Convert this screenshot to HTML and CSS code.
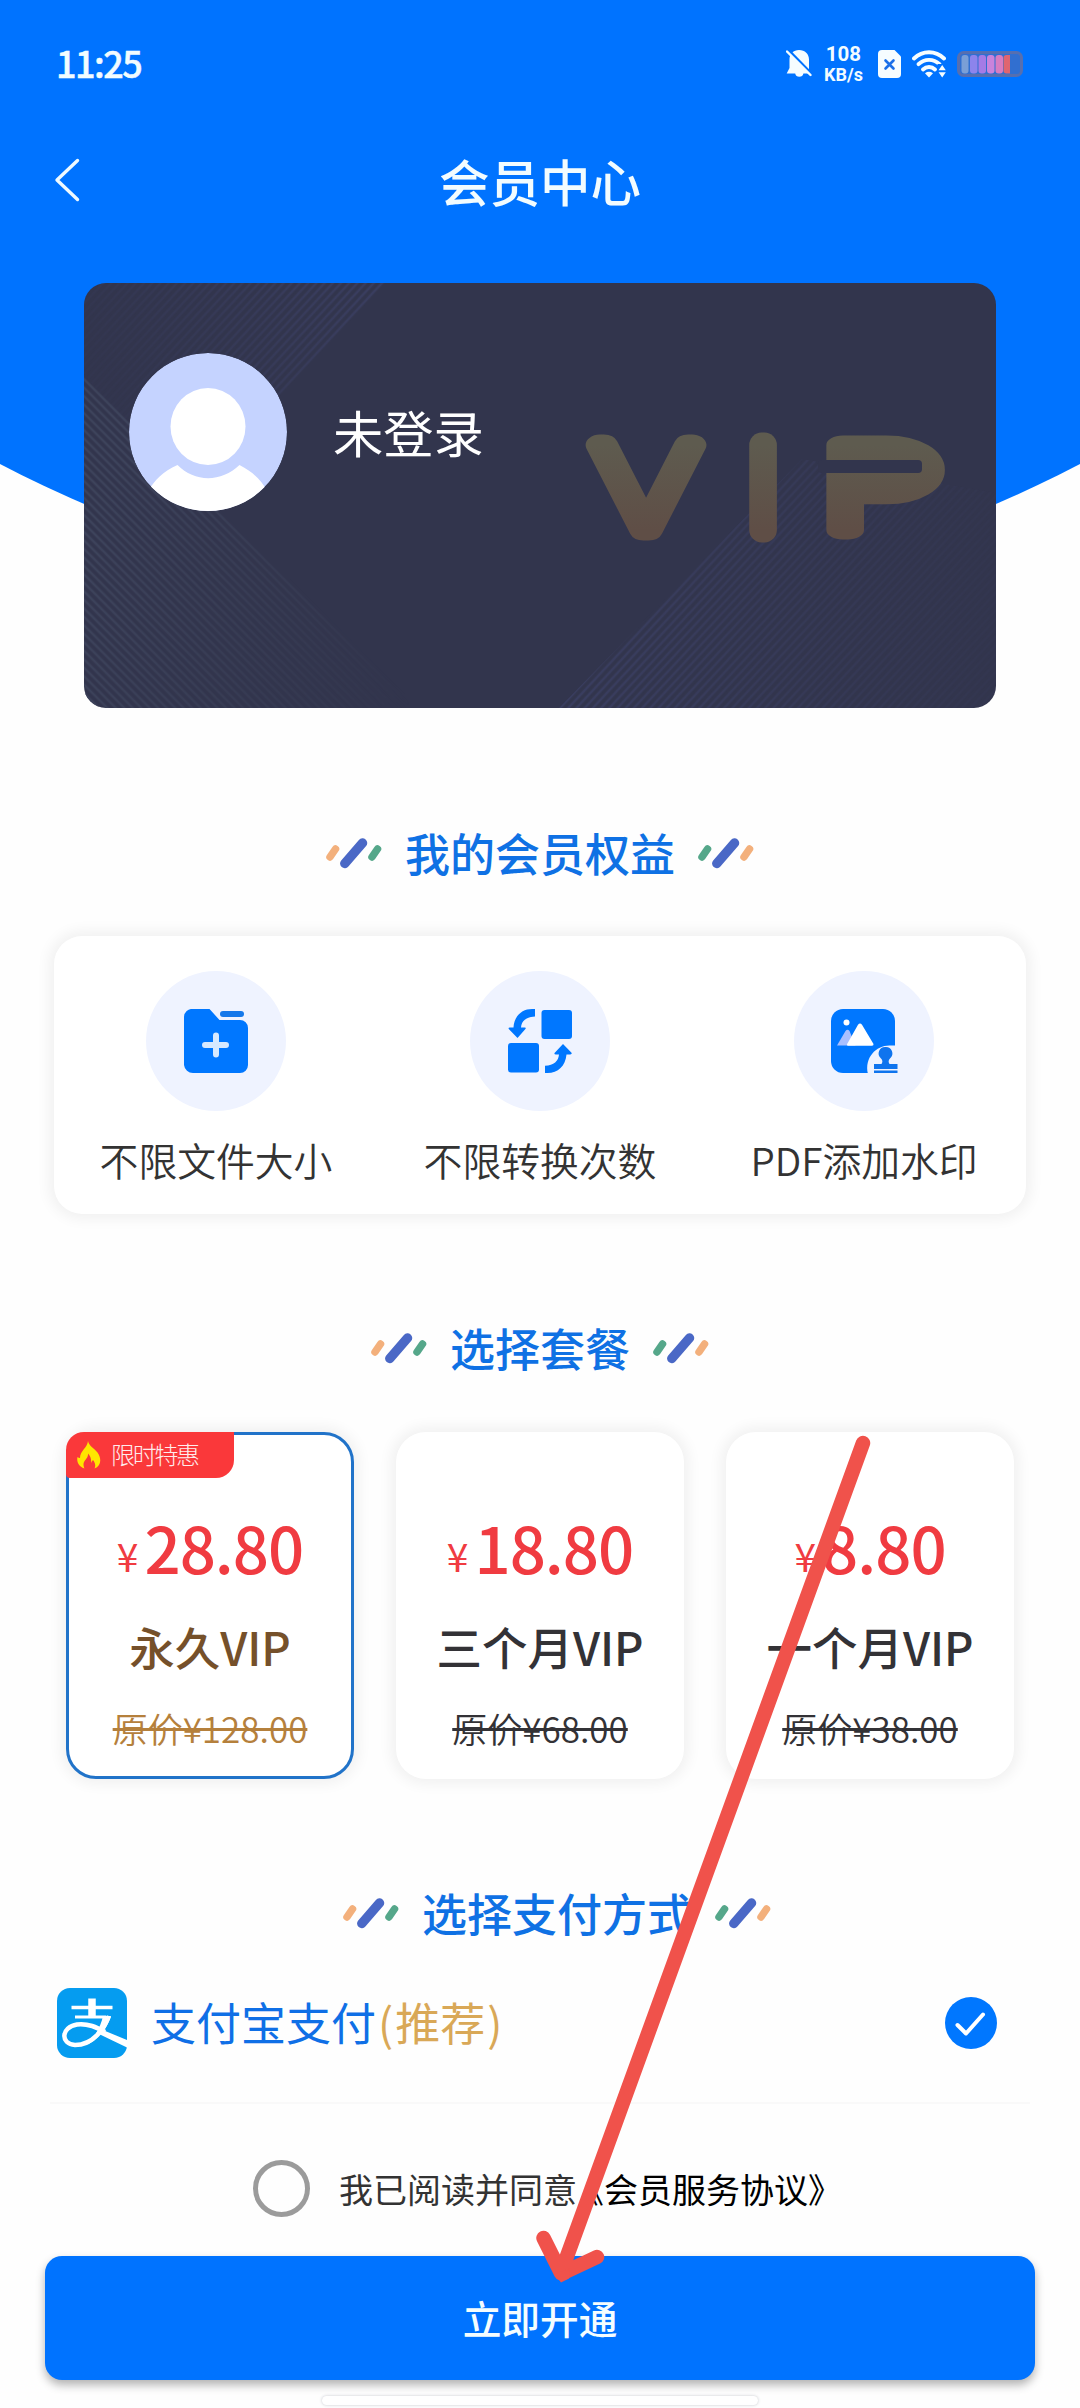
FILE: index.html
```html
<!DOCTYPE html>
<html lang="zh-CN">
<head>
<meta charset="utf-8">
<title>会员中心</title>
<link rel="stylesheet" href="styles.css">
</head>
<body>
<svg class="defs" aria-hidden="true">
  <symbol id="slashes" viewBox="0 0 56 32">
    <g fill="none" stroke-linecap="round">
      <path d="M4 20 9.500 12" stroke="#f3b07c" stroke-width="7.500"/>
      <path d="M18.800 26.500 36.500 6" stroke="#4a68c6" stroke-width="9.500"/>
      <path d="M46 20 51.500 12" stroke="#55a78a" stroke-width="7.500"/>
    </g>
  </symbol>
  <symbol id="slashes-end" viewBox="0 0 56 32">
    <g fill="none" stroke-linecap="round">
      <path d="M4 20 9.500 12" stroke="#55a78a" stroke-width="7.500"/>
      <path d="M18.800 26.500 36.500 6" stroke="#4a68c6" stroke-width="9.500"/>
      <path d="M46 20 51.500 12" stroke="#f3b07c" stroke-width="7.500"/>
    </g>
  </symbol>
</svg>
<main class="page">
  <div class="hero-bg"></div>

  <header class="status">
    <span class="clock">11:25</span>
    <div class="status-icons">
      <svg class="bell" viewBox="0 0 26 30">
        <path d="M13 1c-5.500 0-9.500 4-9.500 9.500v8.500L.7 24.500h8.500a4.200 4.200 0 0 0 8.200 0H23V10.500C23 5 19 1 13 1z" fill="#f6fdff"/>
        <path d="M1.500 0 27 26" stroke="#0073ff" stroke-width="2.500"/>
        <path d="M1 2.500 24.500 26" stroke="#f6fdff" stroke-width="2.400" stroke-linecap="round"/>
      </svg>
      <div class="speed"><b>108</b><b>KB/s</b></div>
      <svg class="sim" viewBox="0 0 23 28">
        <path d="M4 0h12.500L23 6.500V24a4 4 0 0 1-4 4H4a4 4 0 0 1-4-4V4a4 4 0 0 1 4-4z" fill="#f6fdff"/>
        <path d="m7.500 10.500 8 8m0-8-8 8" stroke="#1a6fe8" stroke-width="2.600" stroke-linecap="round"/>
      </svg>
      <svg class="wifi" viewBox="0 0 34 28">
        <g fill="none" stroke="#f6fdff" stroke-width="3.900" stroke-linecap="round">
          <path d="M2 8.500C10.500.2 23.500.2 32 8.500"/>
          <path d="M6.500 14.200c6-5.800 15-5.800 21 0"/>
          <path d="M11 19.500c3.500-3.300 8.500-3.300 12 0"/>
        </g>
        <path d="M13 23.200q4-2.800 8 0l-4 4.300z" fill="#f6fdff"/>
        <path d="M25.500 14H34v14h-8.500z" fill="#0073ff"/>
        <path d="m30.200 15 3.600 5.200h-7.200zM30.200 27.500l3.600-5.200h-7.200z" fill="#f6fdff"/>
      </svg>
      <svg class="battery" viewBox="0 0 66 26">
        <rect x="1.500" y="1.500" width="63" height="23" rx="5" fill="#316fd0" stroke="#566fb0" stroke-width="3"/>
        <rect x="4.500" y="4" width="7" height="18.500" rx="3" fill="#7a9fd6"/>
        <rect x="13" y="4" width="7.500" height="18.500" rx="3" fill="#8c84ec"/>
        <rect x="21.500" y="4" width="7.500" height="18.500" rx="3" fill="#a47be6"/>
        <rect x="30" y="4" width="7.500" height="18.500" rx="3" fill="#c983dc"/>
        <rect x="38.500" y="4" width="7.500" height="18.500" rx="3" fill="#d87cc0"/>
        <path d="M49.500 4H53v18.500h-3.500a3 3 0 0 1-3-3V7a3 3 0 0 1 3-3z" fill="#e0656f"/>
      </svg>
    </div>
  </header>

  <nav class="nav">
    <svg class="back" viewBox="0 0 26 44"><path d="M23.500 2.500 3 22l20.500 19.500" fill="none" stroke="#effaff" stroke-width="3.400" stroke-linecap="round" stroke-linejoin="round"/></svg>
    <h1 class="nav-title">会员中心</h1>
  </nav>

  <section class="member-card">
    <svg class="card-art" viewBox="0 0 912 425">
      <defs>
        <pattern id="rise" width="6" height="6" patternUnits="userSpaceOnUse" patternTransform="rotate(-47)"><path d="M0 2h6" stroke="#3a3e60" stroke-width="2.500"/></pattern>
        <pattern id="fall" width="6" height="6" patternUnits="userSpaceOnUse" patternTransform="rotate(45)"><path d="M0 2h6" stroke="#3d435b" stroke-width="2.500"/></pattern>
        <linearGradient id="fadeTop" x1="1" y1="0" x2="0" y2=".3"><stop offset="0" stop-color="#fff"/><stop offset="1" stop-color="#fff" stop-opacity=".15"/></linearGradient>
        <linearGradient id="fadeLeft" x1="0" y1=".6" x2="1" y2=".9"><stop offset="0" stop-color="#fff"/><stop offset="1" stop-color="#fff" stop-opacity="0"/></linearGradient>
        <linearGradient id="fadeRight" x1="0" y1="0" x2="1" y2="0"><stop offset="0" stop-color="#fff"/><stop offset="1" stop-color="#fff" stop-opacity=".15"/></linearGradient>
        <mask id="mTop"><path d="M0 0h302L180 130 60 170 0 90z" fill="url(#fadeTop)"/></mask>
        <mask id="mLeft"><path d="M0 92 335 425H0z" fill="url(#fadeLeft)"/></mask>
        <mask id="mRight"><path d="M475 425 718 176 912 210v215z" fill="url(#fadeRight)"/></mask>
        <linearGradient id="gold" gradientUnits="userSpaceOnUse" x1="0" y1="0" x2="0" y2="-85"><stop offset="0" stop-color="#5f4e46"/><stop offset="1" stop-color="#5e5b4f"/></linearGradient>
        <linearGradient id="goldBar" gradientUnits="userSpaceOnUse" x1="0" y1="247" x2="0" y2="162"><stop offset="0" stop-color="#5f4e46"/><stop offset="1" stop-color="#5e5b4f"/></linearGradient>
      </defs>
      <rect width="912" height="425" fill="url(#rise)" mask="url(#mTop)"/>
      <rect width="912" height="425" fill="url(#fall)" mask="url(#mLeft)"/>
      <rect width="912" height="425" fill="url(#rise)" mask="url(#mRight)"/>
      <g class="vip-mark">
        <text transform="translate(562 247) scale(1.370 1)" text-anchor="middle">V</text>
        <text transform="translate(679 247)" text-anchor="middle">I</text>
        <text class="vip-p" transform="translate(736 247) scale(1.730 1)">P</text>
      </g>
      <rect x="756" y="172" width="84" height="32" fill="url(#goldBar)"/>
      <rect class="vip-gap" x="734" y="177" width="104" height="13" rx="4"/>
    </svg>
    <svg class="avatar" viewBox="0 0 158 158">
      <clipPath id="disc"><circle cx="79" cy="79" r="79"/></clipPath>
      <g clip-path="url(#disc)">
        <circle cx="79" cy="79" r="79" fill="#c5d3ff"/>
        <ellipse cx="79" cy="73.500" rx="37.500" ry="38.500" fill="#fff"/>
        <path d="M20 137C25 128 34 118 48.500 112c17 17.500 44 17.500 62 0 14 7 22 16 27 25v25H20z" fill="#fff"/>
      </g>
    </svg>
    <span class="member-name">未登录</span>
  </section>

  <h2 class="heading heading-benefits"><svg><use href="#slashes"/></svg><span>我的会员权益</span><svg><use href="#slashes-end"/></svg></h2>

  <section class="benefits">
    <div class="benefit">
      <div class="disc"><svg viewBox="0 0 64 64">
        <path d="M9 0h16.500L35.500 11H56a8 8 0 0 1 8 8v37a8 8 0 0 1-8 8H9a9 9 0 0 1-9-8V8a8 8 0 0 1 9-8z" fill="#0077ff"/>
        <rect x="36" y="2" width="24" height="6" rx="3" fill="#1578ea"/>
        <path d="M21 36h21M32 26.500v19" stroke="#d7e9ff" stroke-width="6" stroke-linecap="round"/>
      </svg></div>
      <span>不限文件大小</span>
    </div>
    <div class="benefit">
      <div class="disc"><svg viewBox="0 0 64 64" fill="#0077ff">
        <rect x="33.500" y="1" width="30.500" height="29" rx="3"/>
        <rect x="0" y="34" width="31" height="29.500" rx="3"/>
        <path d="M27 0v7.500C18 8 13.500 12 13 18.500h3.700q2 0 .5 1.800L9.500 29 1 20.300q-1.200-1.800.8-1.800H5.500C6 7 14 0 24 0z"/>
        <path d="M37 64v-7.200C46 56.500 50.500 52 51 45.500h-3.200q-2.300-.3-.8-1.900L55 35l8.300 8.600q1.200 1.600-1 1.900H58.500C57.500 57 50 64 39.500 64z"/>
      </svg></div>
      <span>不限转换次数</span>
    </div>
    <div class="benefit">
      <div class="disc"><svg class="stamp" viewBox="0 0 67 65">
        <rect width="64" height="64" rx="12" fill="#0077ff"/>
        <path d="M37 65C33 48 46 35.500 60 36.500h7V65z" fill="#eff3ff"/>
        <circle cx="15.500" cy="13.500" r="3" fill="#fff"/>
        <path d="M6 36.500 14.500 22q2-2.500 4 0l6 14.500z" fill="#a9bfff"/>
        <path d="M17 33.500 27 15.800q2-2.800 4 0L42.500 35q.3 1.500-1.500 1.800H17q-2-.5 0-3.300z" fill="#fff"/>
        <path d="M54.500 38a6.500 6.500 0 0 1 4.500 11.500q-2.500 2.500-.5 5.500h8v5H43v-5h7.500q2-3-.5-5.500A6.500 6.500 0 0 1 54.500 38zM43 61.500h23.500V64H43z" fill="#0f74ee"/>
      </svg></div>
      <span>PDF添加水印</span>
    </div>
  </section>

  <h2 class="heading heading-plans"><svg><use href="#slashes"/></svg><span>选择套餐</span><svg><use href="#slashes-end"/></svg></h2>

  <section class="plans">
    <article class="plan plan-selected">
      <div class="deal">
        <svg viewBox="0 0 24 28"><path d="M11 0c1 5 6 7 9.500 11.500C25 18 24 25 17.500 27.500c1.500-3 .5-6-1.500-8.500-1 1-1.500 2-2 3 .5-4-.5-7-3-9.500.5 5-4.500 6.500-4.500 11 0 1.500.5 3 1 4C1 25.500-.5 20 .5 16q1 1 2.500 1C3 10 10.500 6.500 11 0z" fill="#ffe600"/></svg>
        <span>限时特惠</span>
      </div>
      <p class="price"><i>¥</i>28.80</p>
      <p class="term">永久VIP</p>
      <p class="was">原价¥128.00</p>
    </article>
    <article class="plan">
      <p class="price"><i>¥</i>18.80</p>
      <p class="term">三个月VIP</p>
      <p class="was">原价¥68.00</p>
    </article>
    <article class="plan">
      <p class="price"><i>¥</i>8.80</p>
      <p class="term">一个月VIP</p>
      <p class="was">原价¥38.00</p>
    </article>
  </section>

  <h2 class="heading heading-pay"><svg><use href="#slashes"/></svg><span>选择支付方式</span><svg><use href="#slashes-end"/></svg></h2>

  <section class="pay-row">
    <svg class="alipay" viewBox="0 0 70 70">
      <rect width="70" height="70" rx="13" fill="#059cf0"/>
      <g fill="none" stroke="#fff">
        <path d="M14.500 19.500h41" stroke-width="3.500"/>
        <path d="M35 10.500v18" stroke-width="7.500"/>
        <path d="M18 29h31" stroke-width="3"/>
        <path d="M52 28C47 41 36 57 18 57 3 56 4 39 20 36.500c11-1.500 20 3 28 7.500" stroke-width="4.500"/>
      </g>
      <path d="M46 28h8c-2 6-4.500 10.500-7 14.500L70 52v7.500L43 46.500c-4 5-8 8-13 10.500 8-8 14-19 16-29z" fill="#fff"/>
    </svg>
    <span class="pay-name">支付宝支付</span><span class="pay-tag"><i>(</i>推荐<i>)</i></span>
    <svg class="check" viewBox="0 0 52 52"><circle cx="26" cy="26" r="26" fill="#0077ff"/><path d="m12.500 28 8.500 8.500L38 17.500" fill="none" stroke="#fff" stroke-width="4" stroke-linecap="round" stroke-linejoin="round"/></svg>
  </section>
  <div class="divider"></div>

  <label class="agree"><span class="radio"></span><span>我已阅读并同意</span><a>《会员服务协议》</a></label>
  <button class="buy">立即开通</button>
  <div class="home-bar"></div>

  <svg class="arrow" viewBox="0 0 1080 2408">
    <path d="M863 1443 562 2270M543.500 2238 561 2273M597 2257 563 2273" fill="none" stroke="#f0524b" stroke-width="14.500" stroke-linecap="round"/>
    <path d="m554.500 2274 6.500 8.500 8-4 1-10z" fill="#f0524b"/>
  </svg>
</main>
</body>
</html>
```

FILE: styles.css
```css
* { box-sizing: border-box; }
body, h1, h2, p { margin: 0; font-weight: 400; }
i { font-style: normal; }
body {
  width: 1080px;
  background: #fefefe;
  font-family: "Noto Sans CJK SC", "Noto Sans", sans-serif;
  color: #333;
}
svg { display: block; flex: none; }
.defs { position: absolute; width: 0; height: 0; }
.page {
  position: relative;
  width: 1080px;
  height: 2408px;
  overflow: hidden;
  display: flex;
  flex-direction: column;
}
.hero-bg {
  position: absolute;
  inset: 0 0 auto;
  height: 620px;
  background: #0073ff;
  clip-path: circle(1159.400px at 540px -562px);
}
.status, .nav, .member-card { position: relative; }

/* status bar */
.status {
  height: 128px;
  padding: 0 57px 0 56px;
  display: flex;
  align-items: center;
  justify-content: space-between;
}
.clock {
  color: #f2fcff;
  font-size: 36px;
  line-height: 40px;
  font-weight: 500;
  letter-spacing: -1.500px;
  -webkit-text-stroke: .5px #f2fcff;
  margin-top: -5px;
}
.status-icons { display: flex; align-items: center; height: 30px; }
.bell { width: 26px; height: 30px; }
.speed {
  width: 37px;
  margin: 0 16px 0 13px;
  display: flex;
  flex-direction: column;
  align-items: center;
  color: #f2fcff;
  font-family: Roboto, sans-serif;
}
.speed b { font-size: 20.500px; line-height: 21px; font-weight: 700; }
.speed b + b { font-size: 18px; line-height: 20px; }
.sim { width: 23px; height: 28px; margin-right: 11px; }
.wifi { width: 34px; height: 28px; margin-right: 11px; }
.battery { width: 66px; height: 26px; }

/* navigation */
.nav {
  height: 104px;
  padding: 0 54px;
  display: grid;
  grid-template-columns: 26px 1fr 26px;
  align-items: center;
}
.back { width: 26px; height: 44px; }
.nav-title {
  text-align: center;
  color: #f2fcff;
  font-size: 50.500px;
  line-height: 60px;
  font-weight: 500;
}

/* member card */
.member-card {
  width: 912px;
  height: 425px;
  margin: 51px 0 0 84px;
  padding: 70px 45px;
  display: flex;
  align-items: flex-start;
  gap: 46px;
  overflow: hidden;
  border-radius: 22px;
  background: #32354d;
}
.card-art { position: absolute; inset: 0; width: 912px; height: 425px; }
.vip-mark text {
  font-family: Inter, sans-serif;
  font-size: 117px;
  font-weight: 100;
  fill: url(#gold);
  stroke: url(#gold);
  stroke-width: 25px;
  stroke-linejoin: round;
  vector-effect: non-scaling-stroke;
}
.vip-mark .vip-p { stroke-width: 27px; }
.vip-gap { fill: #32354d; }
.avatar { position: relative; width: 158px; height: 158px; }
.member-name {
  position: relative;
  color: #fff;
  font-size: 50.300px;
  line-height: 156px;
  font-weight: 400;
}

/* section headings */
.heading {
  height: 60px;
  display: flex;
  align-items: center;
  justify-content: center;
  gap: 23px;
  color: #0f71e4;
  font-size: 45px;
  line-height: 60px;
  font-weight: 500;
}
.heading svg { width: 56px; height: 32px; }
.heading-benefits { margin-top: 115px; }
.heading-plans { margin-top: 104px; }
.heading-pay { margin-top: 104px; padding-left: 34px; }

/* benefits */
.benefits {
  width: 972px;
  height: 278px;
  margin: 53px 0 0 54px;
  padding-top: 35px;
  display: grid;
  grid-template-columns: repeat(3, 1fr);
  border-radius: 28px;
  background: #fff;
  box-shadow: 0 0 14px 5px rgba(0, 0, 0, .055);
}
.benefit { display: flex; flex-direction: column; align-items: center; gap: 23px; }
.benefit span { font-size: 38.800px; line-height: 50px; font-weight: 350; white-space: nowrap; }
.disc {
  width: 140px;
  height: 140px;
  display: grid;
  place-items: center;
  border-radius: 50%;
  background: #eff3ff;
}
.disc svg { width: 64px; height: 64px; }
.disc .stamp { width: 67px; height: 65px; }

/* plans */
.plans { display: flex; gap: 42px; margin: 54px 0 0 66px; }
.plan {
  position: relative;
  width: 288px;
  height: 347px;
  padding-top: 79px;
  border-radius: 30px;
  background: #fff;
  box-shadow: 0 0 14px 5px rgba(0, 0, 0, .055);
  text-align: center;
  white-space: nowrap;
  color: #333236;
}
.plan-selected { border: 3px solid #2173c9; padding-top: 76px; }
.deal {
  position: absolute;
  left: -3px;
  top: -3px;
  width: 168px;
  height: 46px;
  padding-left: 11px;
  display: flex;
  align-items: center;
  gap: 10px;
  border-radius: 18px 0 18px 4px;
  background: #fa383a;
  color: #ffecec;
}
.deal svg { width: 24px; height: 28px; }
.deal span { font-size: 24px; line-height: 40px; letter-spacing: -2.300px; font-weight: 300; margin-top: -3px; }
.price { height: 70px; font-size: 63.500px; line-height: 70px; font-weight: 500; letter-spacing: -1px; color: #f03b41; }
.price i { position: relative; top: -2px; font-size: 39px; line-height: 1px; font-weight: 400; margin-right: 7px; }
.term { margin-top: 35px; font-size: 45.500px; line-height: 60px; font-weight: 500; }
.was {
  margin-top: 32px;
  font-size: 35px;
  line-height: 40px;
  font-weight: 350;
  text-decoration: line-through;
  text-decoration-thickness: 3px;
}
.plan-selected .term { color: #75502a; }
.plan-selected .was { color: #b5803c; }

/* payment */
.pay-row {
  height: 78px;
  margin: 41px 83px 0 57px;
  display: flex;
  align-items: center;
  font-size: 45px;
  line-height: 60px;
  color: #0f6fe6;
}
.alipay { width: 70px; height: 70px; margin-right: 24px; }
.pay-name, .pay-tag { margin-top: -3px; }
.pay-tag { color: #d9a857; }
.pay-tag i { margin: 0 2px; }
.check { width: 52px; height: 52px; margin-left: auto; }
.divider { height: 2px; margin: 40px 50px 0; background: #f9f9f9; }

/* agreement and purchase */
.agree {
  height: 57px;
  margin: 56px 0 0 253px;
  display: flex;
  align-items: center;
  font-size: 34px;
  line-height: 50px;
}
.radio { width: 57px; height: 57px; border: 5px solid #9b9b9b; border-radius: 50%; margin-right: 29px; }
.agree a { margin-left: -7px; color: #000; }
.buy {
  width: 990px;
  height: 124px;
  margin: 39px 0 0 45px;
  padding: 0 0 3px;
  border: 0;
  border-radius: 17px;
  background: #0073ff;
  box-shadow: 0 5px 10px rgba(0, 0, 0, .3);
  color: #f4fdff;
  font: 500 38.700px/60px "Noto Sans CJK SC", sans-serif;
}
.home-bar {
  width: 436px;
  height: 9px;
  margin: 16px 0 0 322px;
  border-radius: 5px;
  background: #fff;
  box-shadow: 0 0 3px rgba(60, 70, 90, .3);
}
.arrow { position: absolute; inset: 0; width: 1080px; height: 2408px; pointer-events: none; }
```
